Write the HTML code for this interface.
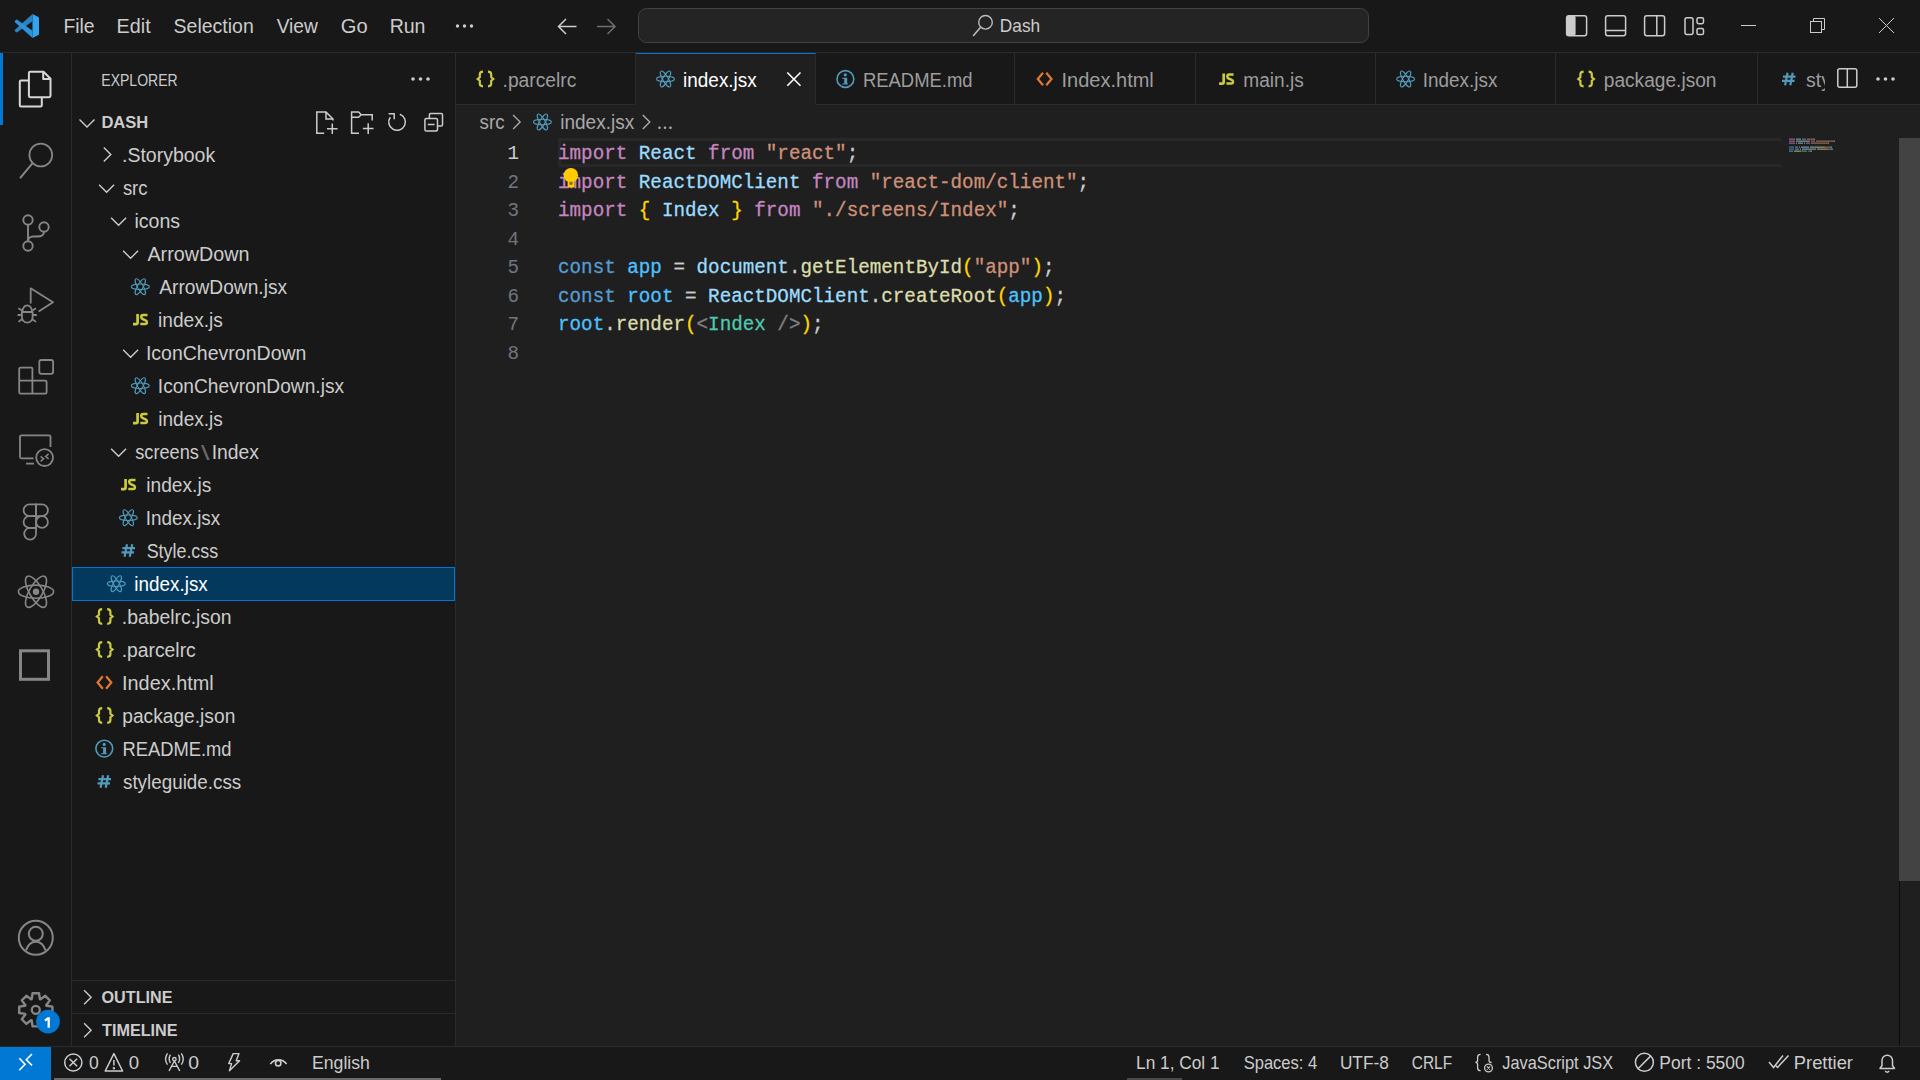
<!DOCTYPE html>
<html><head><meta charset="utf-8"><title>index.jsx - Dash - Visual Studio Code</title>
<style>
html,body{margin:0;padding:0;width:1920px;height:1080px;overflow:hidden;background:#181818;font-family:"Liberation Sans",sans-serif;}
.p{position:absolute;box-sizing:border-box;}
#titlebar{left:0;top:0;width:1920px;height:53px;background:#181818;border-bottom:1px solid #2b2b2b;}
#activity{left:0;top:53px;width:72px;height:993px;background:#181818;border-right:1px solid #2b2b2b;}
#sidebar{left:72px;top:53px;width:384px;height:993px;background:#181818;border-right:1px solid #2b2b2b;}
#editor{left:456px;top:53px;width:1464px;height:993px;background:#1f1f1f;}
#tabs{left:456px;top:53px;width:1464px;height:52px;background:#181818;border-bottom:1px solid #2b2b2b;}
.tab{position:absolute;top:0;height:51px;border-right:1px solid #2b2b2b;box-sizing:border-box;background:#181818;}
.tab.active{background:#1f1f1f;height:52px;border-top:1.5px solid #0078d4;}
#sel{left:72px;top:567px;width:383px;height:34px;background:#04395e;border:1px solid #0078d4;}
#outline{left:72px;top:980px;width:383px;height:1px;background:#2b2b2b;}
#timeline{left:72px;top:1013px;width:383px;height:1px;background:#2b2b2b;}
#lineh{left:558px;top:138px;width:1223px;height:29px;border:3px solid #282828;border-right:0;}
#thumb{left:1899px;top:138px;width:21px;height:743px;background:#434343;}
#shadow{left:1899px;top:881px;width:1px;height:165px;background:#0c0c0d;}
#status{left:0;top:1046px;width:1920px;height:34px;background:#181818;border-top:1px solid #2b2b2b;}
#remote{left:0;top:1047px;width:51px;height:33px;background:#0078d4;}
#hbar1{left:54px;top:1078px;width:387px;height:2px;background:#6b6b6b;}
#hbar2{left:1127px;top:1078px;width:55px;height:2px;background:#4a4a4a;}
svg#ov{position:absolute;left:0;top:0;}
</style></head><body>
<div class="p" id="titlebar"></div>
<div class="p" id="activity"></div>
<div class="p" id="sidebar"></div>
<div class="p" id="editor"></div>
<div class="p" id="tabs">
  <div class="tab" style="left:0;width:180px"></div>
  <div class="tab active" style="left:180px;width:180px"></div>
  <div class="tab" style="left:360px;width:199px"></div>
  <div class="tab" style="left:559px;width:181px"></div>
  <div class="tab" style="left:740px;width:180px"></div>
  <div class="tab" style="left:920px;width:180px"></div>
  <div class="tab" style="left:1100px;width:202px"></div>
</div>
<div class="p" id="sel"></div>
<div class="p" id="outline"></div>
<div class="p" id="timeline"></div>
<div class="p" id="lineh"></div>
<div class="p" id="thumb"></div>
<div class="p" id="shadow"></div>
<div class="p" id="status"></div>
<div class="p" id="remote"></div>
<div class="p" id="hbar1"></div>
<div class="p" id="hbar2"></div>
<svg id="ov" width="1920" height="1080" viewBox="0 0 1920 1080">
<g>
<path d="M32.5,14 L38.3,16.9 Q39,17.3 39,18.1 L39,33.9 Q39,34.7 38.3,35.1 L32.5,38 Z" fill="#35a4ee"/>
<path d="M32.5,14 L32.5,21.2 L17.6,32.1 Q16.6,32.8 15.8,32 L14.9,31.1 Q14.3,30.4 15,29.7 Z" fill="#2a83c6"/>
<path d="M32.5,38 L32.5,30.8 L17.6,19.9 Q16.6,19.2 15.8,20 L14.9,20.9 Q14.3,21.6 15,22.3 Z" fill="#2b92db"/>
</g>
<text x="63.40" y="33.00" font-family="Liberation Sans" font-size="20" textLength="31.20" lengthAdjust="spacingAndGlyphs" fill="#cccccc">File</text>
<text x="116.62" y="33.00" font-family="Liberation Sans" font-size="20" textLength="34.04" lengthAdjust="spacingAndGlyphs" fill="#cccccc">Edit</text>
<text x="173.62" y="33.00" font-family="Liberation Sans" font-size="20" textLength="80.12" lengthAdjust="spacingAndGlyphs" fill="#cccccc">Selection</text>
<text x="276.65" y="33.00" font-family="Liberation Sans" font-size="20" textLength="41.29" lengthAdjust="spacingAndGlyphs" fill="#cccccc">View</text>
<text x="340.74" y="33.00" font-family="Liberation Sans" font-size="20" textLength="26.84" lengthAdjust="spacingAndGlyphs" fill="#cccccc">Go</text>
<text x="389.64" y="33.00" font-family="Liberation Sans" font-size="20" textLength="35.88" lengthAdjust="spacingAndGlyphs" fill="#cccccc">Run</text>
<circle cx="457.5" cy="26" r="1.7" fill="#cccccc"/>
<circle cx="464.5" cy="26" r="1.7" fill="#cccccc"/>
<circle cx="471.5" cy="26" r="1.7" fill="#cccccc"/>
<path d="M558.5,26.5 L576.5,26.5 M566,19 L558.5,26.5 L566,34" stroke="#cccccc" stroke-width="1.5" fill="none"/>
<path d="M597,26.5 L615,26.5 M607.5,19 L615,26.5 L607.5,34" stroke="#6f6f6f" stroke-width="1.5" fill="none"/>
<rect x="638.5" y="8.5" width="730" height="34" rx="8" fill="#242424" stroke="#424242" stroke-width="1"/>
<circle cx="985.5" cy="22.3" r="6.8" stroke="#bdbdbd" stroke-width="1.4" fill="none"/><path d="M980.6,27.2 L973.5,35.5" stroke="#bdbdbd" stroke-width="1.6" stroke-linecap="round"/>
<text x="999.83" y="31.90" font-family="Liberation Sans" font-size="18.5" textLength="40.29" lengthAdjust="spacingAndGlyphs" fill="#cccccc">Dash</text>
<rect x="1566.6" y="15.8" width="20" height="20" rx="2.2" stroke="#cccccc" stroke-width="1.5" fill="none"/><rect x="1566.6" y="15.8" width="9" height="20" rx="2" fill="#cccccc"/>
<rect x="1605.6" y="15.8" width="20" height="20" rx="2.2" stroke="#cccccc" stroke-width="1.5" fill="none"/><path d="M1605.6,30.5 H1625.6" stroke="#cccccc" stroke-width="1.5"/>
<rect x="1644.6" y="15.8" width="20" height="20" rx="2.2" stroke="#cccccc" stroke-width="1.5" fill="none"/><path d="M1656.8,15.8 V35.8" stroke="#cccccc" stroke-width="1.5"/>
<rect x="1685" y="17.7" width="8" height="16.8" rx="2" stroke="#cccccc" stroke-width="1.5" fill="none"/><rect x="1697" y="17.7" width="6.5" height="6" rx="1.6" stroke="#cccccc" stroke-width="1.5" fill="none"/><rect x="1697" y="28.5" width="6.5" height="6" rx="1.6" stroke="#cccccc" stroke-width="1.5" fill="none"/>
<path d="M1741,25.5 H1756" stroke="#cccccc" stroke-width="1"/>
<path d="M1813.5,21 V18.5 H1824.5 V29.5 H1822" stroke="#cccccc" stroke-width="1" fill="none"/><rect x="1810.5" y="21.5" width="11" height="11" stroke="#cccccc" stroke-width="1" fill="none"/>
<path d="M1879,18 L1894,33 M1894,18 L1879,33" stroke="#cccccc" stroke-width="1"/>
<rect x="0" y="53" width="3" height="72" fill="#0078d4"/>
<g stroke="#d7d7d7" stroke-width="2" fill="none" stroke-linejoin="round"><path d="M28.5,80.5 H21 Q19.8,80.5 19.8,81.8 V105.2 Q19.8,106.4 21,106.4 H40.5 Q41.8,106.4 41.8,105.2 V98"/><path d="M30.2,71.8 H43.5 L50.5,78.8 V95.8 Q50.5,97.2 49.2,97.2 H30.2 Q28.9,97.2 28.9,95.8 V73.1 Q28.9,71.8 30.2,71.8 Z"/><path d="M43.2,72 V79 H50.3"/></g>
<circle cx="40.8" cy="155" r="11.4" stroke="#868686" stroke-width="1.8" fill="none"/><path d="M32.6,163.2 L20.5,177.6" stroke="#868686" stroke-width="2" stroke-linecap="round"/>
<g stroke="#868686" stroke-width="1.9" fill="none"><circle cx="28" cy="220" r="4.7"/><circle cx="28" cy="246" r="4.7"/><circle cx="44" cy="227" r="4.7"/><path d="M28,224.7 V241.3"/><path d="M44,231.7 C44,235.5 41,236.5 37,236.5 H33 C30,236.5 28,238.5 28,241.3"/></g>
<g stroke="#868686" stroke-width="1.8" fill="none" stroke-linejoin="round"><path d="M30.7,303.4 V288.3 L53,302.2 L38.6,311.6"/><path d="M22.4,312 A4.85,6.6 0 0 1 32.1,312"/><path d="M21.2,312 H33.2 M21.9,312 V316.9 A5.35,5.8 0 0 0 32.6,316.9 V312"/><path d="M18.4,308.3 L22,310.6 M36,308.3 L32.4,310.6 M17.6,315 H21.6 M32.8,315 H36.8 M18.4,321.9 L22,319.2 M36,321.9 L32.4,319.2"/></g>
<g stroke="#868686" stroke-width="1.8" fill="none" stroke-linejoin="round"><path d="M20.6,367.6 H31.6 Q32.4,367.6 32.4,368.4 V380.6 H45.2 Q46.6,380.6 46.6,382 V392.2 Q46.6,393.6 45.2,393.6 H20.6 Q19.2,393.6 19.2,392.2 V369 Q19.2,367.6 20.6,367.6 Z"/><path d="M32.4,380.6 V393.6 M19.2,380.6 H32.4"/><rect x="39.3" y="360" width="13.8" height="13.8" rx="2"/></g>
<g stroke="#868686" stroke-width="1.8" fill="none"><path d="M33.5,458.3 H21.5 Q20,458.3 20,456.8 V436.8 Q20,435.3 21.5,435.3 H49 Q50.5,435.3 50.5,436.8 V447"/><path d="M26,463.6 H34"/><circle cx="44.6" cy="457.6" r="8.4"/><path d="M40.6,456.3 L43.6,458.8 L40.6,461.3 M48.6,453.9 L45.6,456.4 L48.6,458.9" stroke-width="1.5"/></g>
<g stroke="#868686" stroke-width="1.8" fill="none" transform="translate(0,0.8)"><path d="M36,503.5 H29.5 a5.9,5.9 0 0 0 0,11.8 H36 Z"/><path d="M36,503.5 H42 a5.9,5.9 0 0 1 0,11.8 H36 Z"/><path d="M36,515.3 H29.5 a5.9,5.9 0 0 0 0,11.8 H36 Z"/><circle cx="42" cy="521.2" r="5.9"/><path d="M36,527.1 H29.5 a5.9,5.9 0 1 0 6.5,5.9 Z"/></g>
<g stroke="#868686" stroke-width="1.6" fill="none"><ellipse cx="36" cy="591.7" rx="17.6" ry="6.6"/><ellipse cx="36" cy="591.7" rx="17.6" ry="6.6" transform="rotate(60 36 591.7)"/><ellipse cx="36" cy="591.7" rx="17.6" ry="6.6" transform="rotate(120 36 591.7)"/></g><circle cx="36" cy="591.7" r="3.2" fill="#868686"/>
<rect x="20.5" y="650.8" width="28" height="28.5" stroke="#868686" stroke-width="3" fill="none"/>
<g stroke="#868686" stroke-width="2" fill="none"><circle cx="35.8" cy="937.8" r="17"/><circle cx="35.8" cy="933.8" r="7"/><path d="M26,950.5 C28,944.5 31.5,941.8 35.8,941.8 C40.1,941.8 43.6,944.5 45.6,950.5"/></g>
<path d="M32.58,993.21 L39.02,993.21 L39.89,999.16 L40.44,999.39 L45.25,995.79 L49.81,1000.35 L46.21,1005.16 L46.44,1005.71 L52.39,1006.58 L52.39,1013.02 L46.44,1013.89 L46.21,1014.44 L49.81,1019.25 L45.25,1023.81 L40.44,1020.21 L39.89,1020.44 L39.02,1026.39 L32.58,1026.39 L31.71,1020.44 L31.16,1020.21 L26.35,1023.81 L21.79,1019.25 L25.39,1014.44 L25.16,1013.89 L19.21,1013.02 L19.21,1006.58 L25.16,1005.71 L25.39,1005.16 L21.79,1000.35 L26.35,995.79 L31.16,999.39 L31.71,999.16 Z" stroke="#868686" stroke-width="2.4" fill="none" stroke-linejoin="round"/><circle cx="35.8" cy="1009.8" r="4.0" stroke="#868686" stroke-width="2.3" fill="none"/>
<circle cx="48" cy="1021.6" r="11.9" fill="#0078d4"/>
<path d="M44.9,1020.6 L47.9,1018.5 H48.7 V1027.7" stroke="#ffffff" stroke-width="2.3" fill="none" stroke-linejoin="miter"/>
<text x="101.34" y="85.90" font-family="Liberation Sans" font-size="16.6" textLength="76.31" lengthAdjust="spacingAndGlyphs" fill="#cccccc">EXPLORER</text>
<circle cx="413" cy="79" r="1.8" fill="#cccccc"/>
<circle cx="420.5" cy="79" r="1.8" fill="#cccccc"/>
<circle cx="428" cy="79" r="1.8" fill="#cccccc"/>
<path d="M79.5,119.5 L87,127 L94.5,119.5" stroke="#cccccc" stroke-width="1.4" fill="none"/>
<text x="101.38" y="127.60" font-family="Liberation Sans" font-size="16.6" font-weight="700" textLength="46.91" lengthAdjust="spacingAndGlyphs" fill="#cccccc">DASH</text>
<g stroke="#cccccc" stroke-width="1.5" fill="none"><path d="M324.2,133.2 H316.8 V112 H326 L333,119 V120.5 M326,112 V119 H333"/><path d="M332.3,123.4 V134 M327,128.7 H337.6"/><path d="M359,133.2 H351.6 V112 H358.6 L361.2,114.8 H372.2 V120.5 M351.6,117.3 H358.6 L361.2,114.8"/><path d="M368.2,123.3 V134 M362.9,128.6 H373.5"/><path d="M399.8,114.2 A8.3,8.3 0 1 1 390.3,117.2"/><path d="M388.6,113.8 H394.2 V119.2"/><rect x="424.9" y="118.4" width="12.6" height="12.6" rx="1.5"/><path d="M429.4,118.4 V114.8 Q429.4,113.5 430.7,113.5 H441.2 Q442.5,113.5 442.5,114.8 V124.8 Q442.5,126.1 441.2,126.1 H437.5 M427.8,124.4 H434.6"/></g>
<path d="M103.8,147.5 L110.8,154.5 L103.8,161.5" stroke="#cccccc" stroke-width="1.4" fill="none"/>
<text x="122.05" y="161.50" font-family="Liberation Sans" font-size="20" textLength="93.16" lengthAdjust="spacingAndGlyphs" fill="#cccccc">.Storybook</text>
<path d="M99.1,184.7 L106.6,192.3 L114.1,184.7" stroke="#cccccc" stroke-width="1.4" fill="none"/>
<text x="122.89" y="194.50" font-family="Liberation Sans" font-size="20" textLength="24.63" lengthAdjust="spacingAndGlyphs" fill="#cccccc">src</text>
<path d="M111.1,217.7 L118.6,225.3 L126.1,217.7" stroke="#cccccc" stroke-width="1.4" fill="none"/>
<text x="134.38" y="227.50" font-family="Liberation Sans" font-size="20" textLength="45.70" lengthAdjust="spacingAndGlyphs" fill="#cccccc">icons</text>
<path d="M123.1,250.7 L130.6,258.3 L138.1,250.7" stroke="#cccccc" stroke-width="1.4" fill="none"/>
<text x="147.45" y="260.50" font-family="Liberation Sans" font-size="20" textLength="101.99" lengthAdjust="spacingAndGlyphs" fill="#cccccc">ArrowDown</text>
<text x="159.25" y="293.50" font-family="Liberation Sans" font-size="20" textLength="127.80" lengthAdjust="spacingAndGlyphs" fill="#cccccc">ArrowDown.jsx</text>
<g stroke="#519aba" stroke-width="1.05" fill="none"><ellipse cx="140.3" cy="286.7" rx="9.0" ry="2.75"/><ellipse cx="140.3" cy="286.7" rx="9.0" ry="2.75" transform="rotate(60 140.3 286.7)"/><ellipse cx="140.3" cy="286.7" rx="9.0" ry="2.75" transform="rotate(120 140.3 286.7)"/></g>
<text x="158.01" y="326.50" font-family="Liberation Sans" font-size="20" textLength="64.88" lengthAdjust="spacingAndGlyphs" fill="#cccccc">index.js</text>
<g stroke="#cbcb41" fill="none"><path d="M137.6,313.9 V322.5 Q137.6,324.1 136,324.1 H133" stroke-width="2.7"/><path d="M147.5,315.1 H143.2 Q141.2,315.1 141.2,317.1 Q141.2,318.7 143,319.3 L145.2,320.1 Q146.9,320.7 146.9,322.2 Q146.9,324.0 145,324.0 H140.3" stroke-width="2.5"/></g>
<path d="M123.1,349.7 L130.6,357.3 L138.1,349.7" stroke="#cccccc" stroke-width="1.4" fill="none"/>
<text x="145.89" y="359.50" font-family="Liberation Sans" font-size="20" textLength="160.56" lengthAdjust="spacingAndGlyphs" fill="#cccccc">IconChevronDown</text>
<text x="157.83" y="392.50" font-family="Liberation Sans" font-size="20" textLength="186.20" lengthAdjust="spacingAndGlyphs" fill="#cccccc">IconChevronDown.jsx</text>
<g stroke="#519aba" stroke-width="1.05" fill="none"><ellipse cx="140.3" cy="385.7" rx="9.0" ry="2.75"/><ellipse cx="140.3" cy="385.7" rx="9.0" ry="2.75" transform="rotate(60 140.3 385.7)"/><ellipse cx="140.3" cy="385.7" rx="9.0" ry="2.75" transform="rotate(120 140.3 385.7)"/></g>
<text x="158.31" y="425.50" font-family="Liberation Sans" font-size="20" textLength="64.57" lengthAdjust="spacingAndGlyphs" fill="#cccccc">index.js</text>
<g stroke="#cbcb41" fill="none"><path d="M137.6,412.9 V421.5 Q137.6,423.1 136,423.1 H133" stroke-width="2.7"/><path d="M147.5,414.1 H143.2 Q141.2,414.1 141.2,416.1 Q141.2,417.7 143,418.3 L145.2,419.1 Q146.9,419.7 146.9,421.2 Q146.9,423.0 145,423.0 H140.3" stroke-width="2.5"/></g>
<path d="M111.1,448.7 L118.6,456.3 L126.1,448.7" stroke="#cccccc" stroke-width="1.4" fill="none"/>
<text x="135.20" y="458.50" font-family="Liberation Sans" font-size="20" textLength="63.72" lengthAdjust="spacingAndGlyphs" fill="#cccccc">screens</text>
<text x="201.00" y="460.00" font-family="Liberation Sans" font-size="20" textLength="8.51" lengthAdjust="spacingAndGlyphs" fill="#6a6a6a">\</text>
<text x="211.71" y="458.50" font-family="Liberation Sans" font-size="20" textLength="47.26" lengthAdjust="spacingAndGlyphs" fill="#cccccc">Index</text>
<text x="146.20" y="491.50" font-family="Liberation Sans" font-size="20" textLength="65.08" lengthAdjust="spacingAndGlyphs" fill="#cccccc">index.js</text>
<g stroke="#cbcb41" fill="none"><path d="M125.6,478.9 V487.5 Q125.6,489.1 124,489.1 H121" stroke-width="2.7"/><path d="M135.5,480.1 H131.2 Q129.2,480.1 129.2,482.1 Q129.2,483.7 131,484.3 L133.2,485.1 Q134.9,485.7 134.9,487.2 Q134.9,489.0 133,489.0 H128.3" stroke-width="2.5"/></g>
<text x="145.75" y="524.50" font-family="Liberation Sans" font-size="20" textLength="74.46" lengthAdjust="spacingAndGlyphs" fill="#cccccc">Index.jsx</text>
<g stroke="#519aba" stroke-width="1.05" fill="none"><ellipse cx="128.3" cy="517.7" rx="9.0" ry="2.75"/><ellipse cx="128.3" cy="517.7" rx="9.0" ry="2.75" transform="rotate(60 128.3 517.7)"/><ellipse cx="128.3" cy="517.7" rx="9.0" ry="2.75" transform="rotate(120 128.3 517.7)"/></g>
<text x="146.70" y="557.50" font-family="Liberation Sans" font-size="20" textLength="71.45" lengthAdjust="spacingAndGlyphs" fill="#cccccc">Style.css</text>
<path d="M127,544.3 L124.6,556.7 M132.2,544.3 L129.8,556.7 M122.4,548.2 H135 M121.5,552.4 H134" stroke="#519aba" stroke-width="2.2" fill="none"/>
<text x="134.33" y="590.50" font-family="Liberation Sans" font-size="20" textLength="73.42" lengthAdjust="spacingAndGlyphs" fill="#ffffff">index.jsx</text>
<g stroke="#519aba" stroke-width="1.05" fill="none"><ellipse cx="116.3" cy="583.7" rx="9.0" ry="2.75"/><ellipse cx="116.3" cy="583.7" rx="9.0" ry="2.75" transform="rotate(60 116.3 583.7)"/><ellipse cx="116.3" cy="583.7" rx="9.0" ry="2.75" transform="rotate(120 116.3 583.7)"/></g>
<text x="121.76" y="623.50" font-family="Liberation Sans" font-size="20" textLength="109.86" lengthAdjust="spacingAndGlyphs" fill="#cccccc">.babelrc.json</text>
<path d="M102.2,609.1 Q99,609.3 99,611.7 V614.8 L96.9,616.5 L99,618.2 V621.3 Q99,623.7 102.2,623.9 M107.2,609.1 Q110.4,609.3 110.4,611.7 V614.8 L112.5,616.5 L110.4,618.2 V621.3 Q110.4,623.7 107.2,623.9" stroke="#cbcb41" stroke-width="2.2" fill="none"/>
<text x="121.76" y="656.50" font-family="Liberation Sans" font-size="20" textLength="73.96" lengthAdjust="spacingAndGlyphs" fill="#cccccc">.parcelrc</text>
<path d="M102.2,642.1 Q99,642.3 99,644.7 V647.8 L96.9,649.5 L99,651.2 V654.3 Q99,656.7 102.2,656.9 M107.2,642.1 Q110.4,642.3 110.4,644.7 V647.8 L112.5,649.5 L110.4,651.2 V654.3 Q110.4,656.7 107.2,656.9" stroke="#cbcb41" stroke-width="2.2" fill="none"/>
<text x="122.06" y="689.50" font-family="Liberation Sans" font-size="20" textLength="91.65" lengthAdjust="spacingAndGlyphs" fill="#cccccc">Index.html</text>
<path d="M102.8,676.3 L97.6,682.5 L102.8,688.7 M106.1,676.3 L111.3,682.5 L106.1,688.7" stroke="#e37933" stroke-width="2.2" fill="none"/>
<text x="122.25" y="722.50" font-family="Liberation Sans" font-size="20" textLength="113.06" lengthAdjust="spacingAndGlyphs" fill="#cccccc">package.json</text>
<path d="M102.2,708.1 Q99,708.3 99,710.7 V713.8 L96.9,715.5 L99,717.2 V720.3 Q99,722.7 102.2,722.9 M107.2,708.1 Q110.4,708.3 110.4,710.7 V713.8 L112.5,715.5 L110.4,717.2 V720.3 Q110.4,722.7 107.2,722.9" stroke="#cbcb41" stroke-width="2.2" fill="none"/>
<text x="122.39" y="755.50" font-family="Liberation Sans" font-size="20" textLength="109.17" lengthAdjust="spacingAndGlyphs" fill="#cccccc">README.md</text>
<circle cx="104.3" cy="748.6" r="8.4" stroke="#519aba" stroke-width="1.6" fill="none"/><circle cx="104.2" cy="744.4" r="1.6" fill="#519aba"/><path d="M101.1,747.3000000000001 H106.1 V754.2 H101.1 V753.2 H103.1 V748.3000000000001 H101.1 Z M106.1,753.2 H106.89999999999999 V754.2 H106.1 Z" fill="#519aba"/>
<text x="122.98" y="788.50" font-family="Liberation Sans" font-size="20" textLength="118.29" lengthAdjust="spacingAndGlyphs" fill="#cccccc">styleguide.css</text>
<path d="M103,775.3 L100.6,787.7 M108.2,775.3 L105.8,787.7 M98.4,779.2 H111 M97.5,783.4 H110" stroke="#519aba" stroke-width="2.2" fill="none"/>
<path d="M84.1,990.3 L91.1,997.3 L84.1,1004.3" stroke="#cccccc" stroke-width="1.4" fill="none"/>
<text x="101.55" y="1002.80" font-family="Liberation Sans" font-size="16.6" font-weight="700" textLength="70.97" lengthAdjust="spacingAndGlyphs" fill="#cccccc">OUTLINE</text>
<path d="M84.1,1023.3 L91.1,1030.3 L84.1,1037.3" stroke="#cccccc" stroke-width="1.4" fill="none"/>
<text x="102.04" y="1035.70" font-family="Liberation Sans" font-size="16.6" font-weight="700" textLength="75.60" lengthAdjust="spacingAndGlyphs" fill="#cccccc">TIMELINE</text>
<path d="M483.0,71.6 Q479.8,71.8 479.8,74.2 V77.3 L477.7,79 L479.8,80.7 V83.8 Q479.8,86.2 483.0,86.4 M488.0,71.6 Q491.2,71.8 491.2,74.2 V77.3 L493.3,79 L491.2,80.7 V83.8 Q491.2,86.2 488.0,86.4" stroke="#cbcb41" stroke-width="2.2" fill="none"/>
<text x="502.57" y="86.80" font-family="Liberation Sans" font-size="20" textLength="73.75" lengthAdjust="spacingAndGlyphs" fill="#9d9d9d">.parcelrc</text>
<g stroke="#519aba" stroke-width="1.05" fill="none"><ellipse cx="665.5" cy="79" rx="9.0" ry="2.75"/><ellipse cx="665.5" cy="79" rx="9.0" ry="2.75" transform="rotate(60 665.5 79)"/><ellipse cx="665.5" cy="79" rx="9.0" ry="2.75" transform="rotate(120 665.5 79)"/></g>
<text x="683.12" y="86.80" font-family="Liberation Sans" font-size="20" textLength="73.63" lengthAdjust="spacingAndGlyphs" fill="#ffffff">index.jsx</text>
<path d="M787.3,72.5 L800.5,85.7 M800.5,72.5 L787.3,85.7" stroke="#ffffff" stroke-width="1.6"/>
<circle cx="845.4" cy="79" r="8.4" stroke="#519aba" stroke-width="1.6" fill="none"/><circle cx="845.3" cy="74.8" r="1.6" fill="#519aba"/><path d="M842.1999999999999,77.7 H847.1999999999999 V84.6 H842.1999999999999 V83.6 H844.1999999999999 V78.7 H842.1999999999999 Z M847.1999999999999,83.6 H848.0 V84.6 H847.1999999999999 Z" fill="#519aba"/>
<text x="862.98" y="86.80" font-family="Liberation Sans" font-size="20" textLength="109.58" lengthAdjust="spacingAndGlyphs" fill="#9d9d9d">README.md</text>
<path d="M1043.0,72.8 L1037.8,79 L1043.0,85.2 M1046.3,72.8 L1051.5,79 L1046.3,85.2" stroke="#e37933" stroke-width="2.2" fill="none"/>
<text x="1061.55" y="86.80" font-family="Liberation Sans" font-size="20" textLength="92.27" lengthAdjust="spacingAndGlyphs" fill="#9d9d9d">Index.html</text>
<g stroke="#cbcb41" fill="none"><path d="M1223.6999999999998,73.4 V82 Q1223.6999999999998,83.6 1222.1,83.6 H1219.1" stroke-width="2.7"/><path d="M1233.6,74.6 H1229.3 Q1227.3,74.6 1227.3,76.6 Q1227.3,78.2 1229.1,78.8 L1231.3,79.6 Q1233.0,80.2 1233.0,81.7 Q1233.0,83.5 1231.1,83.5 H1226.3999999999999" stroke-width="2.5"/></g>
<text x="1243.31" y="86.80" font-family="Liberation Sans" font-size="20" textLength="60.46" lengthAdjust="spacingAndGlyphs" fill="#9d9d9d">main.js</text>
<g stroke="#519aba" stroke-width="1.05" fill="none"><ellipse cx="1405.6" cy="79" rx="9.0" ry="2.75"/><ellipse cx="1405.6" cy="79" rx="9.0" ry="2.75" transform="rotate(60 1405.6 79)"/><ellipse cx="1405.6" cy="79" rx="9.0" ry="2.75" transform="rotate(120 1405.6 79)"/></g>
<text x="1422.85" y="86.80" font-family="Liberation Sans" font-size="20" textLength="74.56" lengthAdjust="spacingAndGlyphs" fill="#9d9d9d">Index.jsx</text>
<path d="M1583.6000000000001,71.6 Q1580.4,71.8 1580.4,74.2 V77.3 L1578.3000000000002,79 L1580.4,80.7 V83.8 Q1580.4,86.2 1583.6000000000001,86.4 M1588.6000000000001,71.6 Q1591.8000000000002,71.8 1591.8000000000002,74.2 V77.3 L1593.9,79 L1591.8000000000002,80.7 V83.8 Q1591.8000000000002,86.2 1588.6000000000001,86.4" stroke="#cbcb41" stroke-width="2.2" fill="none"/>
<text x="1603.76" y="86.80" font-family="Liberation Sans" font-size="20" textLength="112.75" lengthAdjust="spacingAndGlyphs" fill="#9d9d9d">package.json</text>
<path d="M1787.5,72.8 L1785.1,85.2 M1792.7,72.8 L1790.3,85.2 M1782.9,76.7 H1795.5 M1782.0,80.9 H1794.5" stroke="#519aba" stroke-width="2.2" fill="none"/>
<svg x="1800" y="53" width="25" height="51" overflow="hidden"><text x="6.06" y="33.80" font-family="Liberation Sans" font-size="20" textLength="122.54" lengthAdjust="spacingAndGlyphs" fill="#9d9d9d">styleguide.css</text></svg>
<g stroke="#cccccc" stroke-width="1.5" fill="none"><rect x="1837.8" y="68.8" width="19" height="18.5" rx="2"/><path d="M1847.3,68.8 V87.3"/></g>
<circle cx="1878" cy="79" r="1.8" fill="#cccccc"/>
<circle cx="1885.5" cy="79" r="1.8" fill="#cccccc"/>
<circle cx="1893" cy="79" r="1.8" fill="#cccccc"/>
<text x="479.59" y="129.00" font-family="Liberation Sans" font-size="20" textLength="24.94" lengthAdjust="spacingAndGlyphs" fill="#a9a9a9">src</text>
<path d="M513.1,115 L520.1,122 L513.1,129" stroke="#a9a9a9" stroke-width="1.4" fill="none"/>
<g stroke="#519aba" stroke-width="1.05" fill="none"><ellipse cx="542.4" cy="122" rx="9.0" ry="2.75"/><ellipse cx="542.4" cy="122" rx="9.0" ry="2.75" transform="rotate(60 542.4 122)"/><ellipse cx="542.4" cy="122" rx="9.0" ry="2.75" transform="rotate(120 542.4 122)"/></g>
<text x="560.22" y="129.00" font-family="Liberation Sans" font-size="20" textLength="73.93" lengthAdjust="spacingAndGlyphs" fill="#a9a9a9">index.jsx</text>
<path d="M642.8,115 L649.8,122 L642.8,129" stroke="#a9a9a9" stroke-width="1.4" fill="none"/>
<circle cx="659.5" cy="127.8" r="1.3" fill="#a9a9a9"/>
<circle cx="665" cy="127.8" r="1.3" fill="#a9a9a9"/>
<circle cx="670.5" cy="127.8" r="1.3" fill="#a9a9a9"/>
<text x="558.00" y="159.20" font-family="Liberation Mono" font-size="20.5" textLength="69.28" lengthAdjust="spacingAndGlyphs" fill="#c586c0" stroke="#c586c0" stroke-width="0.3" xml:space="preserve">import</text>
<text x="638.82" y="159.20" font-family="Liberation Mono" font-size="20.5" textLength="57.73" lengthAdjust="spacingAndGlyphs" fill="#9cdcfe" stroke="#9cdcfe" stroke-width="0.3" xml:space="preserve">React</text>
<text x="708.10" y="159.20" font-family="Liberation Mono" font-size="20.5" textLength="46.18" lengthAdjust="spacingAndGlyphs" fill="#c586c0" stroke="#c586c0" stroke-width="0.3" xml:space="preserve">from</text>
<text x="765.83" y="159.20" font-family="Liberation Mono" font-size="20.5" textLength="80.82" lengthAdjust="spacingAndGlyphs" fill="#ce9178" stroke="#ce9178" stroke-width="0.3" xml:space="preserve">"react"</text>
<text x="846.65" y="159.20" font-family="Liberation Mono" font-size="20.5" textLength="11.55" lengthAdjust="spacingAndGlyphs" fill="#cccccc" stroke="#cccccc" stroke-width="0.3" xml:space="preserve">;</text>
<text x="558.00" y="187.70" font-family="Liberation Mono" font-size="20.5" textLength="69.28" lengthAdjust="spacingAndGlyphs" fill="#c586c0" stroke="#c586c0" stroke-width="0.3" xml:space="preserve">import</text>
<text x="638.82" y="187.70" font-family="Liberation Mono" font-size="20.5" textLength="161.64" lengthAdjust="spacingAndGlyphs" fill="#9cdcfe" stroke="#9cdcfe" stroke-width="0.3" xml:space="preserve">ReactDOMClient</text>
<text x="812.01" y="187.70" font-family="Liberation Mono" font-size="20.5" textLength="46.18" lengthAdjust="spacingAndGlyphs" fill="#c586c0" stroke="#c586c0" stroke-width="0.3" xml:space="preserve">from</text>
<text x="869.74" y="187.70" font-family="Liberation Mono" font-size="20.5" textLength="207.83" lengthAdjust="spacingAndGlyphs" fill="#ce9178" stroke="#ce9178" stroke-width="0.3" xml:space="preserve">"react-dom/client"</text>
<text x="1077.57" y="187.70" font-family="Liberation Mono" font-size="20.5" textLength="11.55" lengthAdjust="spacingAndGlyphs" fill="#cccccc" stroke="#cccccc" stroke-width="0.3" xml:space="preserve">;</text>
<text x="558.00" y="216.20" font-family="Liberation Mono" font-size="20.5" textLength="69.28" lengthAdjust="spacingAndGlyphs" fill="#c586c0" stroke="#c586c0" stroke-width="0.3" xml:space="preserve">import</text>
<text x="638.82" y="216.20" font-family="Liberation Mono" font-size="20.5" textLength="11.55" lengthAdjust="spacingAndGlyphs" fill="#ffd700" stroke="#ffd700" stroke-width="0.3" xml:space="preserve">{</text>
<text x="661.91" y="216.20" font-family="Liberation Mono" font-size="20.5" textLength="57.73" lengthAdjust="spacingAndGlyphs" fill="#9cdcfe" stroke="#9cdcfe" stroke-width="0.3" xml:space="preserve">Index</text>
<text x="731.19" y="216.20" font-family="Liberation Mono" font-size="20.5" textLength="11.55" lengthAdjust="spacingAndGlyphs" fill="#ffd700" stroke="#ffd700" stroke-width="0.3" xml:space="preserve">}</text>
<text x="754.28" y="216.20" font-family="Liberation Mono" font-size="20.5" textLength="46.18" lengthAdjust="spacingAndGlyphs" fill="#c586c0" stroke="#c586c0" stroke-width="0.3" xml:space="preserve">from</text>
<text x="812.01" y="216.20" font-family="Liberation Mono" font-size="20.5" textLength="196.28" lengthAdjust="spacingAndGlyphs" fill="#ce9178" stroke="#ce9178" stroke-width="0.3" xml:space="preserve">"./screens/Index"</text>
<text x="1008.29" y="216.20" font-family="Liberation Mono" font-size="20.5" textLength="11.55" lengthAdjust="spacingAndGlyphs" fill="#cccccc" stroke="#cccccc" stroke-width="0.3" xml:space="preserve">;</text>
<text x="558.00" y="273.20" font-family="Liberation Mono" font-size="20.5" textLength="57.73" lengthAdjust="spacingAndGlyphs" fill="#569cd6" stroke="#569cd6" stroke-width="0.3" xml:space="preserve">const</text>
<text x="627.28" y="273.20" font-family="Liberation Mono" font-size="20.5" textLength="34.64" lengthAdjust="spacingAndGlyphs" fill="#4fc1ff" stroke="#4fc1ff" stroke-width="0.3" xml:space="preserve">app</text>
<text x="673.46" y="273.20" font-family="Liberation Mono" font-size="20.5" textLength="11.55" lengthAdjust="spacingAndGlyphs" fill="#cccccc" stroke="#cccccc" stroke-width="0.3" xml:space="preserve">=</text>
<text x="696.55" y="273.20" font-family="Liberation Mono" font-size="20.5" textLength="92.37" lengthAdjust="spacingAndGlyphs" fill="#9cdcfe" stroke="#9cdcfe" stroke-width="0.3" xml:space="preserve">document</text>
<text x="788.92" y="273.20" font-family="Liberation Mono" font-size="20.5" textLength="11.55" lengthAdjust="spacingAndGlyphs" fill="#cccccc" stroke="#cccccc" stroke-width="0.3" xml:space="preserve">.</text>
<text x="800.47" y="273.20" font-family="Liberation Mono" font-size="20.5" textLength="161.64" lengthAdjust="spacingAndGlyphs" fill="#dcdcaa" stroke="#dcdcaa" stroke-width="0.3" xml:space="preserve">getElementById</text>
<text x="962.11" y="273.20" font-family="Liberation Mono" font-size="20.5" textLength="11.55" lengthAdjust="spacingAndGlyphs" fill="#ffd700" stroke="#ffd700" stroke-width="0.3" xml:space="preserve">(</text>
<text x="973.66" y="273.20" font-family="Liberation Mono" font-size="20.5" textLength="57.73" lengthAdjust="spacingAndGlyphs" fill="#ce9178" stroke="#ce9178" stroke-width="0.3" xml:space="preserve">"app"</text>
<text x="1031.39" y="273.20" font-family="Liberation Mono" font-size="20.5" textLength="11.55" lengthAdjust="spacingAndGlyphs" fill="#ffd700" stroke="#ffd700" stroke-width="0.3" xml:space="preserve">)</text>
<text x="1042.93" y="273.20" font-family="Liberation Mono" font-size="20.5" textLength="11.55" lengthAdjust="spacingAndGlyphs" fill="#cccccc" stroke="#cccccc" stroke-width="0.3" xml:space="preserve">;</text>
<text x="558.00" y="301.70" font-family="Liberation Mono" font-size="20.5" textLength="57.73" lengthAdjust="spacingAndGlyphs" fill="#569cd6" stroke="#569cd6" stroke-width="0.3" xml:space="preserve">const</text>
<text x="627.28" y="301.70" font-family="Liberation Mono" font-size="20.5" textLength="46.18" lengthAdjust="spacingAndGlyphs" fill="#4fc1ff" stroke="#4fc1ff" stroke-width="0.3" xml:space="preserve">root</text>
<text x="685.01" y="301.70" font-family="Liberation Mono" font-size="20.5" textLength="11.55" lengthAdjust="spacingAndGlyphs" fill="#cccccc" stroke="#cccccc" stroke-width="0.3" xml:space="preserve">=</text>
<text x="708.10" y="301.70" font-family="Liberation Mono" font-size="20.5" textLength="161.64" lengthAdjust="spacingAndGlyphs" fill="#9cdcfe" stroke="#9cdcfe" stroke-width="0.3" xml:space="preserve">ReactDOMClient</text>
<text x="869.74" y="301.70" font-family="Liberation Mono" font-size="20.5" textLength="11.55" lengthAdjust="spacingAndGlyphs" fill="#cccccc" stroke="#cccccc" stroke-width="0.3" xml:space="preserve">.</text>
<text x="881.29" y="301.70" font-family="Liberation Mono" font-size="20.5" textLength="115.46" lengthAdjust="spacingAndGlyphs" fill="#dcdcaa" stroke="#dcdcaa" stroke-width="0.3" xml:space="preserve">createRoot</text>
<text x="996.75" y="301.70" font-family="Liberation Mono" font-size="20.5" textLength="11.55" lengthAdjust="spacingAndGlyphs" fill="#ffd700" stroke="#ffd700" stroke-width="0.3" xml:space="preserve">(</text>
<text x="1008.29" y="301.70" font-family="Liberation Mono" font-size="20.5" textLength="34.64" lengthAdjust="spacingAndGlyphs" fill="#4fc1ff" stroke="#4fc1ff" stroke-width="0.3" xml:space="preserve">app</text>
<text x="1042.93" y="301.70" font-family="Liberation Mono" font-size="20.5" textLength="11.55" lengthAdjust="spacingAndGlyphs" fill="#ffd700" stroke="#ffd700" stroke-width="0.3" xml:space="preserve">)</text>
<text x="1054.48" y="301.70" font-family="Liberation Mono" font-size="20.5" textLength="11.55" lengthAdjust="spacingAndGlyphs" fill="#cccccc" stroke="#cccccc" stroke-width="0.3" xml:space="preserve">;</text>
<text x="558.00" y="330.20" font-family="Liberation Mono" font-size="20.5" textLength="46.18" lengthAdjust="spacingAndGlyphs" fill="#4fc1ff" stroke="#4fc1ff" stroke-width="0.3" xml:space="preserve">root</text>
<text x="604.18" y="330.20" font-family="Liberation Mono" font-size="20.5" textLength="11.55" lengthAdjust="spacingAndGlyphs" fill="#cccccc" stroke="#cccccc" stroke-width="0.3" xml:space="preserve">.</text>
<text x="615.73" y="330.20" font-family="Liberation Mono" font-size="20.5" textLength="69.28" lengthAdjust="spacingAndGlyphs" fill="#dcdcaa" stroke="#dcdcaa" stroke-width="0.3" xml:space="preserve">render</text>
<text x="685.01" y="330.20" font-family="Liberation Mono" font-size="20.5" textLength="11.55" lengthAdjust="spacingAndGlyphs" fill="#ffd700" stroke="#ffd700" stroke-width="0.3" xml:space="preserve">(</text>
<text x="696.55" y="330.20" font-family="Liberation Mono" font-size="20.5" textLength="11.55" lengthAdjust="spacingAndGlyphs" fill="#808080" stroke="#808080" stroke-width="0.3" xml:space="preserve">&lt;</text>
<text x="708.10" y="330.20" font-family="Liberation Mono" font-size="20.5" textLength="57.73" lengthAdjust="spacingAndGlyphs" fill="#4ec9b0" stroke="#4ec9b0" stroke-width="0.3" xml:space="preserve">Index</text>
<text x="777.37" y="330.20" font-family="Liberation Mono" font-size="20.5" textLength="23.09" lengthAdjust="spacingAndGlyphs" fill="#808080" stroke="#808080" stroke-width="0.3" xml:space="preserve">/&gt;</text>
<text x="800.47" y="330.20" font-family="Liberation Mono" font-size="20.5" textLength="11.55" lengthAdjust="spacingAndGlyphs" fill="#ffd700" stroke="#ffd700" stroke-width="0.3" xml:space="preserve">)</text>
<text x="812.01" y="330.20" font-family="Liberation Mono" font-size="20.5" textLength="11.55" lengthAdjust="spacingAndGlyphs" fill="#cccccc" stroke="#cccccc" stroke-width="0.3" xml:space="preserve">;</text>
<text x="519" y="159.20" text-anchor="end" font-family="Liberation Mono" font-size="20.5" textLength="11.55" lengthAdjust="spacingAndGlyphs" fill="#cccccc">1</text>
<text x="519" y="187.70" text-anchor="end" font-family="Liberation Mono" font-size="20.5" textLength="11.55" lengthAdjust="spacingAndGlyphs" fill="#6e7681">2</text>
<text x="519" y="216.20" text-anchor="end" font-family="Liberation Mono" font-size="20.5" textLength="11.55" lengthAdjust="spacingAndGlyphs" fill="#6e7681">3</text>
<text x="519" y="244.70" text-anchor="end" font-family="Liberation Mono" font-size="20.5" textLength="11.55" lengthAdjust="spacingAndGlyphs" fill="#6e7681">4</text>
<text x="519" y="273.20" text-anchor="end" font-family="Liberation Mono" font-size="20.5" textLength="11.55" lengthAdjust="spacingAndGlyphs" fill="#6e7681">5</text>
<text x="519" y="301.70" text-anchor="end" font-family="Liberation Mono" font-size="20.5" textLength="11.55" lengthAdjust="spacingAndGlyphs" fill="#6e7681">6</text>
<text x="519" y="330.20" text-anchor="end" font-family="Liberation Mono" font-size="20.5" textLength="11.55" lengthAdjust="spacingAndGlyphs" fill="#6e7681">7</text>
<text x="519" y="358.70" text-anchor="end" font-family="Liberation Mono" font-size="20.5" textLength="11.55" lengthAdjust="spacingAndGlyphs" fill="#6e7681">8</text>
<g><circle cx="570.9" cy="175.2" r="7.2" fill="#ffcc00"/><rect x="567.6" y="179" width="6.8" height="8.6" rx="1" fill="#ffcc00"/><rect x="569.4" y="181.8" width="3.2" height="3" fill="#1f1f1f" opacity="0.55"/></g>
<rect x="1789.00" y="138.40" width="6.00" height="1.6" fill="#c586c0" opacity="0.5"/>
<rect x="1796.00" y="138.40" width="5.00" height="1.6" fill="#9cdcfe" opacity="0.5"/>
<rect x="1802.00" y="138.40" width="4.00" height="1.6" fill="#c586c0" opacity="0.5"/>
<rect x="1807.00" y="138.40" width="7.00" height="1.6" fill="#ce9178" opacity="0.5"/>
<rect x="1814.00" y="138.40" width="1.00" height="1.6" fill="#cccccc" opacity="0.5"/>
<rect x="1789.00" y="140.40" width="6.00" height="1.6" fill="#c586c0" opacity="0.5"/>
<rect x="1796.00" y="140.40" width="14.00" height="1.6" fill="#9cdcfe" opacity="0.5"/>
<rect x="1811.00" y="140.40" width="4.00" height="1.6" fill="#c586c0" opacity="0.5"/>
<rect x="1816.00" y="140.40" width="18.00" height="1.6" fill="#ce9178" opacity="0.5"/>
<rect x="1834.00" y="140.40" width="1.00" height="1.6" fill="#cccccc" opacity="0.5"/>
<rect x="1789.00" y="142.40" width="6.00" height="1.6" fill="#c586c0" opacity="0.5"/>
<rect x="1796.00" y="142.40" width="1.00" height="1.6" fill="#ffd700" opacity="0.5"/>
<rect x="1798.00" y="142.40" width="5.00" height="1.6" fill="#9cdcfe" opacity="0.5"/>
<rect x="1804.00" y="142.40" width="1.00" height="1.6" fill="#ffd700" opacity="0.5"/>
<rect x="1806.00" y="142.40" width="4.00" height="1.6" fill="#c586c0" opacity="0.5"/>
<rect x="1811.00" y="142.40" width="17.00" height="1.6" fill="#ce9178" opacity="0.5"/>
<rect x="1828.00" y="142.40" width="1.00" height="1.6" fill="#cccccc" opacity="0.5"/>
<rect x="1789.00" y="146.40" width="5.00" height="1.6" fill="#569cd6" opacity="0.5"/>
<rect x="1795.00" y="146.40" width="3.00" height="1.6" fill="#4fc1ff" opacity="0.5"/>
<rect x="1799.00" y="146.40" width="1.00" height="1.6" fill="#cccccc" opacity="0.5"/>
<rect x="1801.00" y="146.40" width="8.00" height="1.6" fill="#9cdcfe" opacity="0.5"/>
<rect x="1810.00" y="146.40" width="14.00" height="1.6" fill="#dcdcaa" opacity="0.5"/>
<rect x="1824.00" y="146.40" width="1.00" height="1.6" fill="#ffd700" opacity="0.5"/>
<rect x="1825.00" y="146.40" width="5.00" height="1.6" fill="#ce9178" opacity="0.5"/>
<rect x="1830.00" y="146.40" width="2.00" height="1.6" fill="#cccccc" opacity="0.5"/>
<rect x="1789.00" y="148.40" width="5.00" height="1.6" fill="#569cd6" opacity="0.5"/>
<rect x="1795.00" y="148.40" width="4.00" height="1.6" fill="#4fc1ff" opacity="0.5"/>
<rect x="1800.00" y="148.40" width="1.00" height="1.6" fill="#cccccc" opacity="0.5"/>
<rect x="1802.00" y="148.40" width="14.00" height="1.6" fill="#9cdcfe" opacity="0.5"/>
<rect x="1817.00" y="148.40" width="10.00" height="1.6" fill="#dcdcaa" opacity="0.5"/>
<rect x="1827.00" y="148.40" width="1.00" height="1.6" fill="#ffd700" opacity="0.5"/>
<rect x="1828.00" y="148.40" width="3.00" height="1.6" fill="#4fc1ff" opacity="0.5"/>
<rect x="1831.00" y="148.40" width="2.00" height="1.6" fill="#cccccc" opacity="0.5"/>
<rect x="1789.00" y="150.40" width="4.00" height="1.6" fill="#4fc1ff" opacity="0.5"/>
<rect x="1794.00" y="150.40" width="6.00" height="1.6" fill="#dcdcaa" opacity="0.5"/>
<rect x="1800.00" y="150.40" width="1.00" height="1.6" fill="#ffd700" opacity="0.5"/>
<rect x="1801.00" y="150.40" width="1.00" height="1.6" fill="#808080" opacity="0.5"/>
<rect x="1802.00" y="150.40" width="5.00" height="1.6" fill="#4ec9b0" opacity="0.5"/>
<rect x="1808.00" y="150.40" width="2.00" height="1.6" fill="#808080" opacity="0.5"/>
<rect x="1810.00" y="150.40" width="2.00" height="1.6" fill="#cccccc" opacity="0.5"/>
<path d="M19.3,1058.3 L25,1064.3 L19.3,1070.3 M32,1054 L26.3,1059.7 L32,1065.4" stroke="#ffffff" stroke-width="1.6" fill="none"/>
<g stroke="#cccccc" stroke-width="1.5" fill="none"><circle cx="73.3" cy="1062.5" r="8.6"/><path d="M69.5,1058.7 L77.1,1066.3 M77.1,1058.7 L69.5,1066.3"/><path d="M113.9,1053.6 L122.6,1071 H105.2 Z" stroke-linejoin="round"/><path d="M113.9,1060 V1065.5"/><circle cx="113.9" cy="1068.2" r="0.5"/></g>
<text x="88.90" y="1068.60" font-family="Liberation Sans" font-size="18.5" textLength="9.78" lengthAdjust="spacingAndGlyphs" fill="#cccccc">0</text>
<text x="128.85" y="1068.60" font-family="Liberation Sans" font-size="18.5" textLength="10.37" lengthAdjust="spacingAndGlyphs" fill="#cccccc">0</text>
<g stroke="#cccccc" stroke-width="1.4" fill="none"><path d="M167.5,1053.3 Q163.6,1059 167.5,1064.7 M170.4,1054.6 Q168,1058.8 170.4,1063 M181.3,1053.3 Q185.2,1059 181.3,1064.7 M178.4,1054.6 Q180.8,1058.8 178.4,1063"/><circle cx="174.4" cy="1059.2" r="1.7"/><path d="M174.4,1061 L169,1071 M174.4,1061 L179.8,1071 M170.8,1066.4 H178"/></g>
<text x="188.22" y="1068.60" font-family="Liberation Sans" font-size="18.5" textLength="10.83" lengthAdjust="spacingAndGlyphs" fill="#cccccc">0</text>
<path d="M233.2,1053.6 H239 L236.2,1060.8 H239.6 L229.4,1070.8 L231.6,1063.6 H228.7 Z" stroke="#cccccc" stroke-width="1.4" fill="none" stroke-linejoin="round"/>
<g stroke="#cccccc" stroke-width="1.6" fill="none"><path d="M270.4,1064.2 A9.2,8.2 0 0 1 286.6,1064.2"/><circle cx="278.2" cy="1063.2" r="2.7"/></g>
<text x="312.04" y="1068.75" font-family="Liberation Sans" font-size="18.5" textLength="57.85" lengthAdjust="spacingAndGlyphs" fill="#cccccc">English</text>
<text x="1136.08" y="1068.60" font-family="Liberation Sans" font-size="18.5" textLength="83.52" lengthAdjust="spacingAndGlyphs" fill="#cccccc">Ln 1, Col 1</text>
<text x="1243.66" y="1068.60" font-family="Liberation Sans" font-size="18.5" textLength="73.54" lengthAdjust="spacingAndGlyphs" fill="#cccccc">Spaces: 4</text>
<text x="1339.91" y="1068.60" font-family="Liberation Sans" font-size="18.5" textLength="48.83" lengthAdjust="spacingAndGlyphs" fill="#cccccc">UTF-8</text>
<text x="1411.73" y="1068.60" font-family="Liberation Sans" font-size="18.5" textLength="40.41" lengthAdjust="spacingAndGlyphs" fill="#cccccc">CRLF</text>
<g stroke="#cccccc" fill="none"><path d="M1480.6,1054.3 Q1477.6,1054.3 1477.6,1057 V1060.6 Q1477.6,1062.4 1475.4,1062.4 Q1477.6,1062.4 1477.6,1064.2 V1067.9 Q1477.6,1070.6 1480.6,1070.6" stroke-width="1.3"/><path d="M1486,1054.3 Q1489,1054.3 1489,1057 V1060.4 Q1489,1062.3 1491.6,1062.5" stroke-width="1.3"/><circle cx="1488.5" cy="1068" r="3.9" stroke-width="1.3"/><path d="M1486.9,1066.4 L1490.1,1069.6 M1490.1,1066.4 L1486.9,1069.6" stroke-width="1.1"/></g>
<text x="1502.36" y="1068.60" font-family="Liberation Sans" font-size="18.5" textLength="110.72" lengthAdjust="spacingAndGlyphs" fill="#cccccc">JavaScript JSX</text>
<g stroke="#cccccc" stroke-width="1.5" fill="none"><circle cx="1644.4" cy="1062.3" r="9"/><path d="M1650.8,1055.9 L1638,1068.7"/></g>
<text x="1659.36" y="1068.60" font-family="Liberation Sans" font-size="18.5" textLength="85.33" lengthAdjust="spacingAndGlyphs" fill="#cccccc">Port : 5500</text>
<path d="M1769,1062 L1773.5,1067.5 L1783,1055.5 M1776,1065.8 L1777.5,1067.5 L1788.5,1055.5" stroke="#cccccc" stroke-width="1.5" fill="none"/>
<text x="1793.78" y="1068.60" font-family="Liberation Sans" font-size="18.5" textLength="59.20" lengthAdjust="spacingAndGlyphs" fill="#cccccc">Prettier</text>
<g stroke="#cccccc" stroke-width="1.5" fill="none"><path d="M1880,1068.5 H1894.5 L1892.5,1065.5 V1060.5 A5.2,5.2 0 0 0 1882,1060.5 V1065.5 Z" stroke-linejoin="round"/><path d="M1885.2,1071 Q1887.2,1073.3 1889.2,1071"/></g>
</svg>
</body></html>
